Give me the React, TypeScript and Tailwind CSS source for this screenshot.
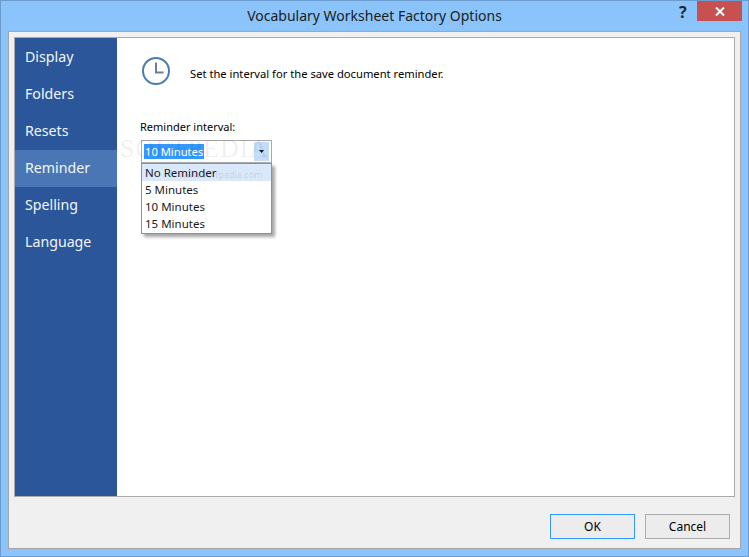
import { useState } from 'react';

const navItems = ['Display', 'Folders', 'Resets', 'Reminder', 'Spelling', 'Language'];
const intervals = ['No Reminder', '5 Minutes', '10 Minutes', '15 Minutes'];

function ClockIcon() {
  return (
    <svg width="30" height="30" viewBox="0 0 30 30" fill="none" stroke="#4a7cb5">
      <circle cx="15" cy="15" r="13" strokeWidth="2" />
      <path d="M15 6.5V16.5H22.5" strokeWidth="2" stroke="#6d7f94" />
    </svg>
  );
}

export default function App() {
  const [active] = useState('Reminder');

  return (
    <div className="w-[749px] h-[557px] flex flex-col border border-[#6c9cce] bg-[#8ac4fb] font-['Noto_Sans',sans-serif] text-black overflow-hidden">
      {/* title bar */}
      <div className="h-[30px] shrink-0 flex items-start relative">
        <div className="flex-1 text-center text-[14px] leading-[30px] text-[#1c1c1c]">
          Vocabulary Worksheet Factory Options
        </div>
        <span className="absolute left-[678px] top-[1px] text-[16px] leading-[20px] font-bold text-[#262626]">?</span>
        <div className="absolute left-[696px] top-0 w-[45px] h-[20px] bg-[#c75050] flex items-center justify-center">
          <svg width="10" height="9" viewBox="0 0 10 9" fill="none" stroke="white" strokeWidth="2">
            <path d="M1 0.5L9 8.5M9 0.5L1 8.5" />
          </svg>
        </div>
      </div>

      {/* client area */}
      <div className="mx-[7px] mb-[7px] flex-1 flex flex-col border border-[#a5a5a5] bg-[#f0f0f0] px-[5px] pt-[5px]">
        <div className="h-[460px] flex border border-[#a9a9a9] bg-white">
          <div className="w-[102px] shrink-0 bg-[#2b579a] pt-[1px]">
            {navItems.map(item => (
              <div
                key={item}
                className={`h-[37px] pl-[10px] text-[14.2px] leading-[35px] text-[#f2f6fb] ${item === active ? 'bg-[#4a76b5]' : ''}`}
              >
                {item}
              </div>
            ))}
          </div>

          <div className="flex-1 relative pl-[24px] pt-[18px]">
            <div className="flex items-center gap-[19px] h-[30px]">
              <ClockIcon />
              <span className="text-[11.2px] leading-[16px] mt-[6px]">Set the interval for the save document reminder.</span>
            </div>

            <div className="text-[11px] leading-[16px] mt-[33px] -ml-[1px]">Reminder interval:</div>

            <div className="relative mt-[5px] w-[131px]">
              <div className="h-[23px] flex items-center border border-[#a9a9a9] bg-white pl-[2px] pr-[2px]">
                <span className="bg-[#3399ff] text-white text-[11.2px] leading-[15px] px-[1px] -mt-[1px]">10 Minutes</span>
                <div className="ml-auto w-[15px] h-[19px] bg-[#c3dcfa] flex items-center justify-center">
                  <svg width="5" height="3" viewBox="0 0 5 3" fill="#1a1a1a">
                    <path d="M0 0H5L2.5 3Z" />
                  </svg>
                </div>
              </div>
              <div className="absolute left-0 top-[23px] w-[131px] border border-[#569de5] bg-white shadow-[3px_3px_3px_rgba(0,0,0,0.35)] pb-[1px]">
                {intervals.map(option => (
                  <div
                    key={option}
                    className={`h-[17px] pl-[3px] text-[11.5px] leading-[17px] text-[#1a1a1a] ${option === 'No Reminder' ? 'bg-[#dae8fc]' : ''}`}
                  >
                    {option}
                  </div>
                ))}
              </div>
            </div>

            {/* watermark */}
            <div className="absolute left-[3px] top-[97px] text-[26px] leading-[28px] tracking-[1px] text-[#000000]/[0.08] font-['Liberation_Serif',serif]">
              SOFTPEDIA
            </div>
            <div className="absolute left-[62px] top-[130px] text-[9px] leading-[14px] text-[#000000]/[0.12]">
              www.softpedia.com
            </div>
          </div>
        </div>

        <div className="flex justify-end gap-[10px] pt-[17px] pr-[5px]">
          <button className="w-[85px] h-[25px] border border-[#3399ff] bg-[#ececec] text-[12px] leading-[22px]">OK</button>
          <button className="w-[85px] h-[25px] border border-[#acacac] bg-[#ececec] text-[12px] leading-[22px]">Cancel</button>
        </div>
      </div>
    </div>
  );
}
